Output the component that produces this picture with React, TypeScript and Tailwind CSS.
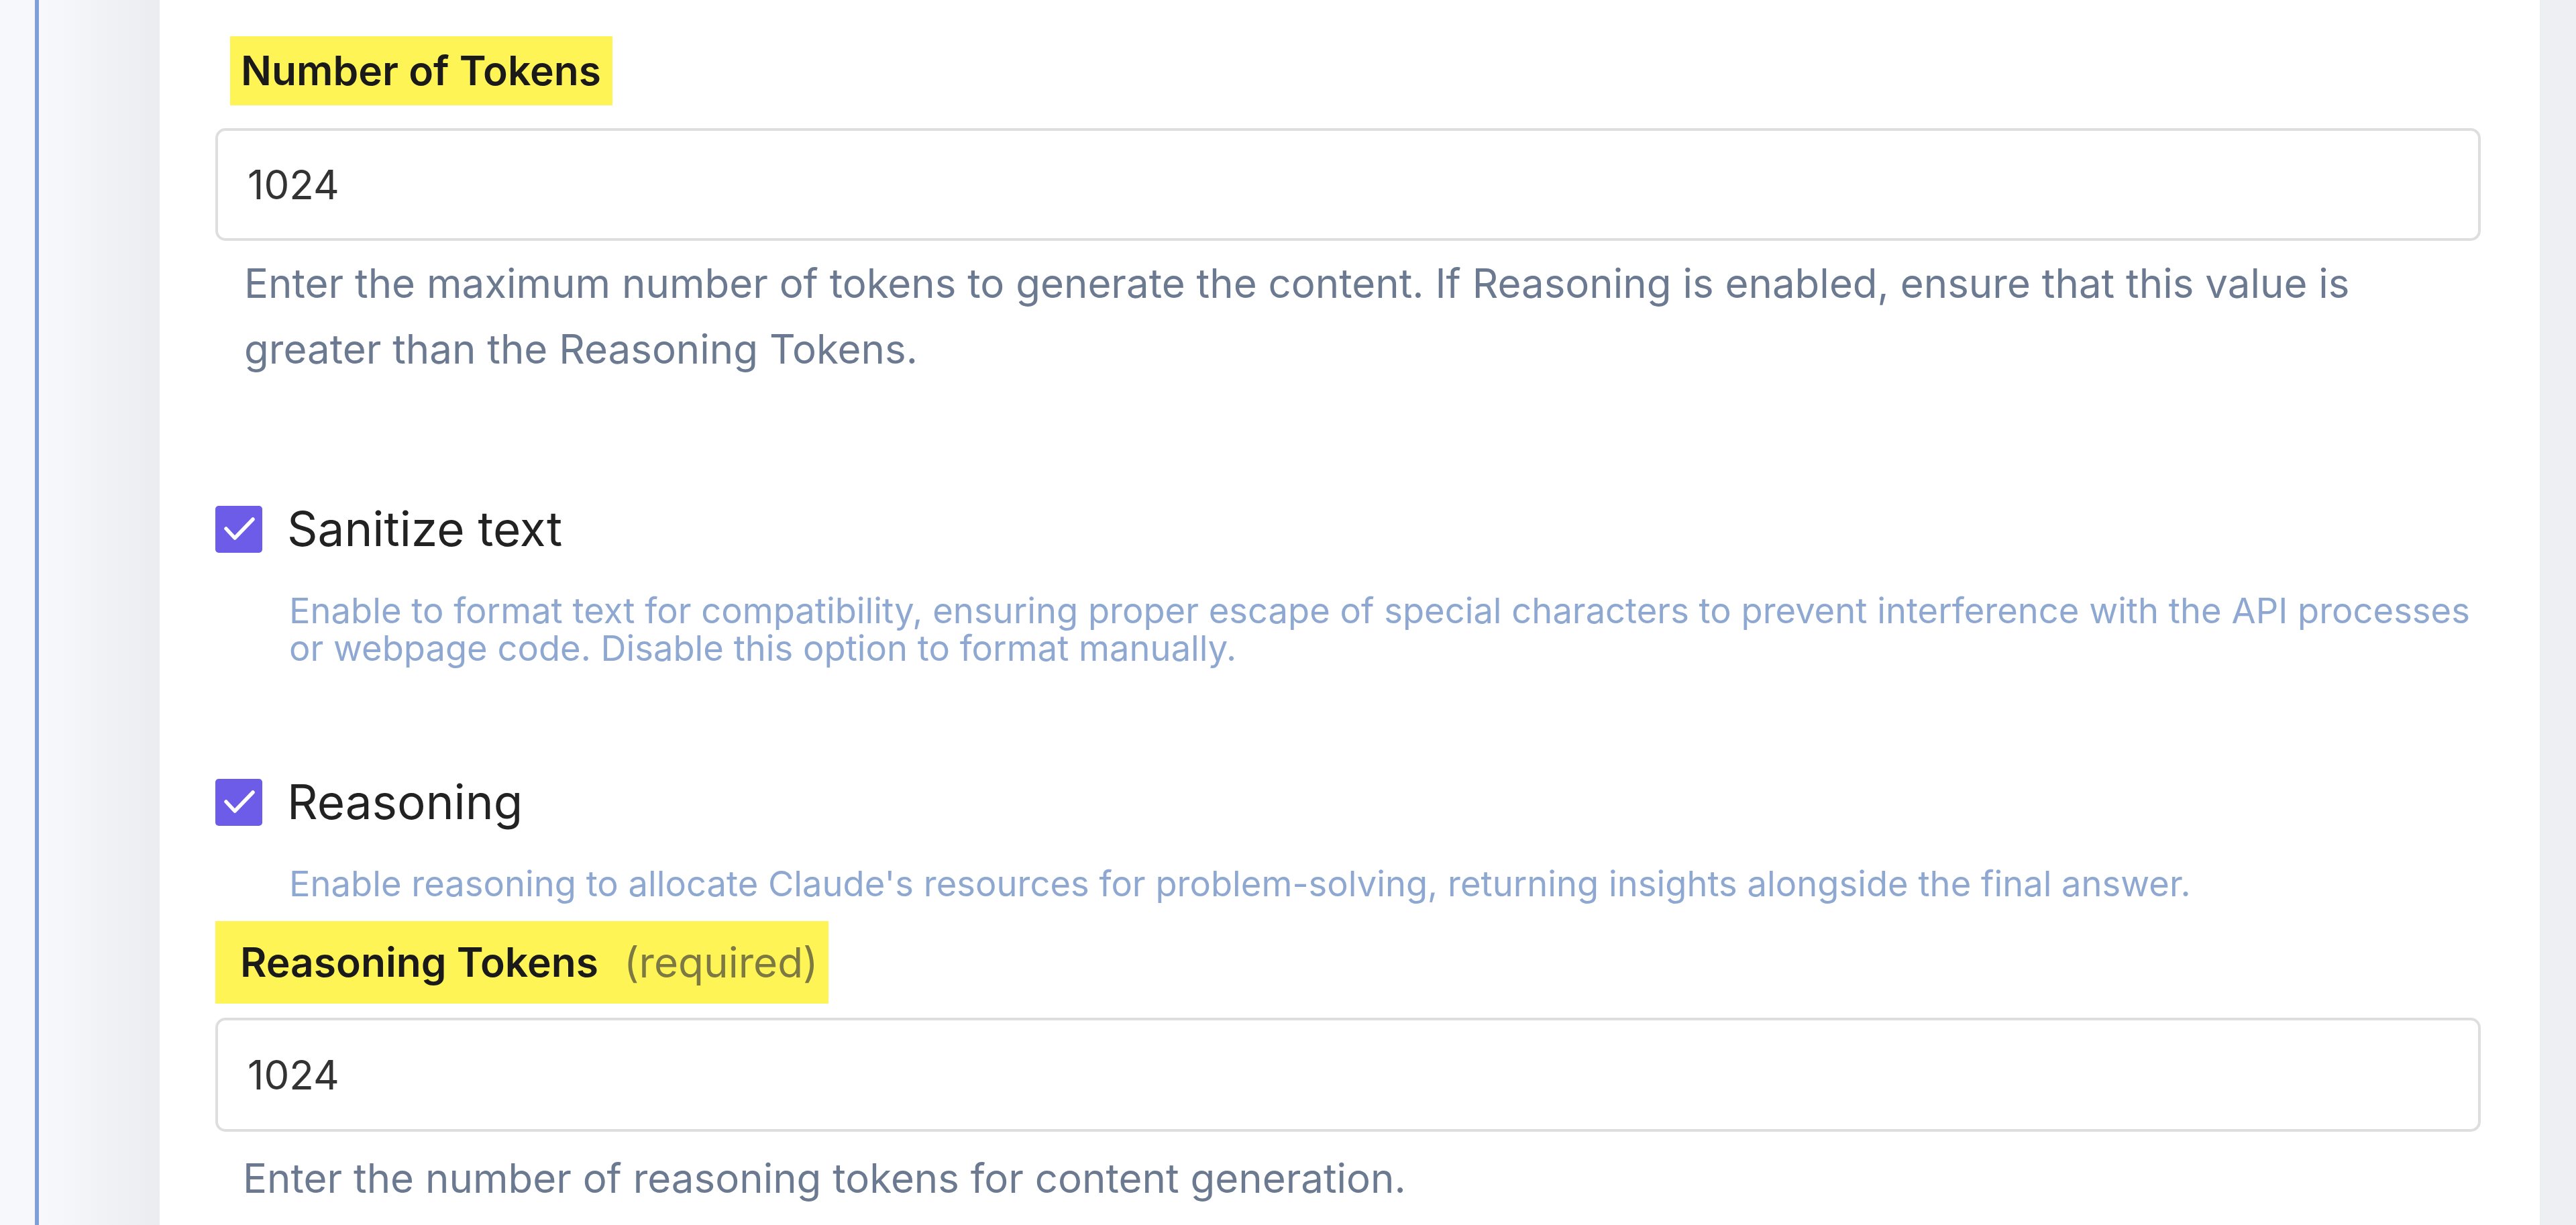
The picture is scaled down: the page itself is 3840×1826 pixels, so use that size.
const FONT = "font-['Inter','Noto_Sans',sans-serif]";

function Checkbox() {
  return (
    <span className="flex h-[70px] w-[70px] shrink-0 items-center justify-center rounded-[5px] bg-[#6c5ce7]">
      <svg width="70" height="70" viewBox="0 0 70 70" aria-hidden="true">
        <polyline
          points="16,34 29,48 56,20"
          fill="none"
          stroke="#ffffff"
          strokeWidth="5.5"
          strokeLinecap="round"
          strokeLinejoin="round"
        />
      </svg>
    </span>
  );
}

function NumberInput({ value, tall }: { value: string; tall?: boolean }) {
  return (
    <div
      className={`flex items-center rounded-[15px] border-[4px] border-[#dedede] bg-white px-[44px] ${
        tall ? 'h-[170px]' : 'h-[168px]'
      }`}
    >
      <span className="text-[60px] leading-none text-[#333333]">{value}</span>
    </div>
  );
}

function Toggle({ label, children }: { label: string; children: React.ReactNode }) {
  return (
    <div className="flex flex-col">
      <div className="flex items-center gap-[37px]">
        <Checkbox />
        <span className="text-[71px] leading-none text-[#222222]">{label}</span>
      </div>
      <p className="mt-[58px] pl-[110px] text-[52.5px] leading-[56px] text-[#8ea8d2]">{children}</p>
    </div>
  );
}

export default function App() {
  return (
    <div className={`flex h-[1826px] w-full overflow-hidden bg-[#f6f8fc] ${FONT}`}>
      {/* side rail */}
      <div className="w-[52px] shrink-0" />
      <div className="w-[6px] shrink-0 bg-[#809fd8]" />
      <div className="w-[180px] shrink-0 bg-gradient-to-r from-[#f7f9fc] to-[#eaecf0]" />

      {/* form card */}
      <div className="flex flex-1 flex-col bg-white pl-[83px] pr-[88px] pt-[54px]">
        <div className="ml-[22px] flex h-[103px] w-[570px] items-center bg-[#fff455] pl-[16px]">
          <span className="text-[60.5px] font-semibold leading-none text-[#1a1a1a]">Number of Tokens</span>
        </div>

        <div className="mt-[34px]">
          <NumberInput value="1024" />
        </div>
        <p className="mt-[14px] pl-[43px] text-[60px] leading-[98px] text-[#6c7a91]">
          Enter the maximum number of tokens to generate the content. If Reasoning is enabled, ensure that this value is
          <br />
          greater than the Reasoning Tokens.
        </p>

        <div className="mt-[184px]">
          <Toggle label="Sanitize text">
            Enable to format text for compatibility, ensuring proper escape of special characters to prevent interference with the API processes
            <br />
            or webpage code. Disable this option to format manually.
          </Toggle>
        </div>

        <div className="mt-[166px]">
          <Toggle label="Reasoning">
            Enable reasoning to allocate Claude's resources for problem-solving, returning insights alongside the final answer.
          </Toggle>
        </div>

        <div className="mt-[28px] flex h-[123px] w-[914px] items-center bg-[#fff455] pl-[37px]">
          <span className="text-[60.5px] font-semibold leading-none text-[#1a1a1a]">Reasoning Tokens</span>
          <span className="ml-[38px] text-[62px] leading-none text-[#7c7943]">(required)</span>
        </div>

        <div className="mt-[21px]">
          <NumberInput value="1024" tall />
        </div>
        <p className="mt-[20px] pl-[41px] text-[60px] leading-[98px] text-[#6c7a91]">
          Enter the number of reasoning tokens for content generation.
        </p>
      </div>

      <div className="w-[54px] shrink-0 bg-[#eeeff3]" />
    </div>
  );
}
